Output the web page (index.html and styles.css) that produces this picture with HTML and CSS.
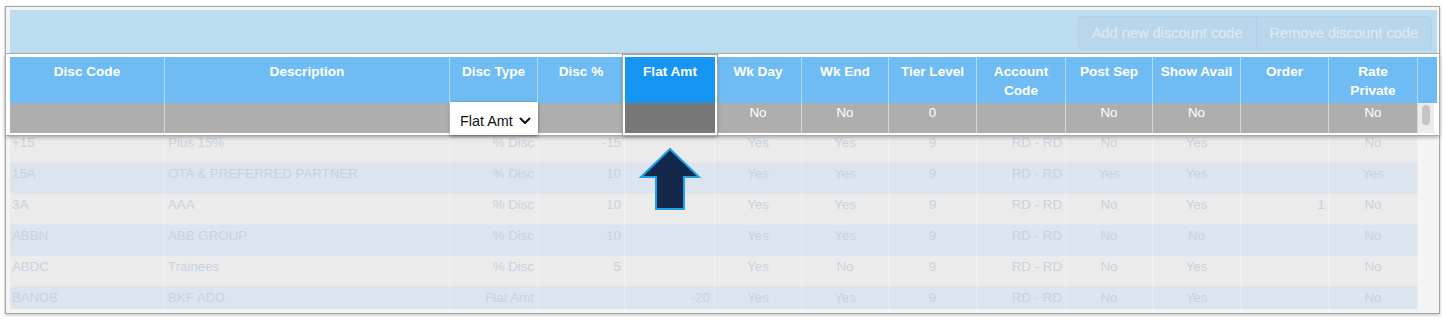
FILE: index.html
```html
<!DOCTYPE html>
<html>
<head>
<meta charset="utf-8">
<link rel="stylesheet" href="styles.css">
</head>
<body>
<div class="frame">
  <div class="toolbar">
    <div class="btn-group">
      <span class="btn">Add new discount code</span>
      <span class="btn">Remove discount code</span>
    </div>
  </div>

  <div class="head">
    <div class="th">Disc Code</div>
    <div class="th">Description</div>
    <div class="th">Disc Type</div>
    <div class="th">Disc %</div>
    <div class="hl">
      <div class="hl-top">Flat Amt</div>
      <div class="hl-bot"></div>
    </div>
    <div class="th">Wk Day</div>
    <div class="th">Wk End</div>
    <div class="th">Tier Level</div>
    <div class="th">Account<br>Code</div>
    <div class="th">Post Sep</div>
    <div class="th">Show Avail</div>
    <div class="th">Order</div>
    <div class="th">Rate<br>Private</div>
    <div class="th filler"></div>

    <div class="tf"></div>
    <div class="tf"></div>
    <div class="tf"><div class="select"><span>Flat Amt</span><svg width="12" height="8" viewBox="0 0 12 8"><path d="M1.5 1.5 L6 6 L10.5 1.5" fill="none" stroke="#111" stroke-width="2" stroke-linecap="round" stroke-linejoin="round"/></svg></div></div>
    <div class="tf"></div>
    <div class="tf">No</div>
    <div class="tf">No</div>
    <div class="tf">0</div>
    <div class="tf"></div>
    <div class="tf">No</div>
    <div class="tf">No</div>
    <div class="tf"></div>
    <div class="tf">No</div>
    <div class="tf gutter"><div class="thumb"></div></div>
  </div>

  <div class="body">
    <div class="row"><span>+15</span><span>Plus 15%</span><span>% Disc</span><span>-15</span><span></span><span>Yes</span><span>Yes</span><span>9</span><span>RD - RD</span><span>No</span><span>Yes</span><span></span><span>No</span></div>
    <div class="row"><span>15A</span><span>OTA &amp; PREFERRED PARTNER</span><span>% Disc</span><span>10</span><span></span><span>Yes</span><span>Yes</span><span>9</span><span>RD - RD</span><span>Yes</span><span>Yes</span><span></span><span>Yes</span></div>
    <div class="row"><span>3A</span><span>AAA</span><span>% Disc</span><span>10</span><span></span><span>Yes</span><span>Yes</span><span>9</span><span>RD - RD</span><span>No</span><span>Yes</span><span>1</span><span>No</span></div>
    <div class="row"><span>ABBN</span><span>ABB GROUP</span><span>% Disc</span><span>10</span><span></span><span>Yes</span><span>Yes</span><span>9</span><span>RD - RD</span><span>No</span><span>No</span><span></span><span>No</span></div>
    <div class="row"><span>ABDC</span><span>Trainees</span><span>% Disc</span><span>5</span><span></span><span>Yes</span><span>No</span><span>9</span><span>RD - RD</span><span>No</span><span>Yes</span><span></span><span>No</span></div>
    <div class="row"><span>BANDB</span><span>BKF ADD</span><span>Flat Amt</span><span></span><span>-20</span><span>Yes</span><span>Yes</span><span>9</span><span>RD - RD</span><span>No</span><span>Yes</span><span></span><span>No</span></div>
  </div>
</div>

<svg class="arrow" width="64" height="66" viewBox="0 0 64 66">
  <path d="M32 3 L61 31 L46 31 L46 63 L18 63 L18 31 L3 31 Z" fill="#13284a" stroke="#1fa0e8" stroke-width="2" stroke-linejoin="miter"/>
</svg>
</body>
</html>
```

FILE: styles.css
```css
* { box-sizing: border-box; }

html, body {
  margin: 0;
  padding: 0;
  background: #ffffff;
}

body {
  font-family: "Liberation Sans", Arial, Helvetica, sans-serif;
  font-size: 13px;
  width: 1445px;
  height: 322px;
  overflow: hidden;
}

.frame {
  position: relative;
  margin: 6px 0 0 5px;
  width: 1435px;
  height: 308px;
  border: 1px solid #a6a6a6;
  box-shadow: 0 1px 3px rgba(0, 0, 0, 0.28);
  background: #f4f4f4;
  padding: 3px 2px 4px 4px;
}

/* toolbar */
.toolbar {
  height: 44px;
  background: #bcdcf0;
  display: flex;
  align-items: center;
  justify-content: flex-end;
  padding-right: 5px;
}

.btn-group {
  display: flex;
  height: 34px;
  margin-top: 2px;
  border: 1px solid #b0d1e8;
  border-radius: 4px;
  background: #b8d7ec;
}

.btn {
  display: flex;
  align-items: center;
  padding: 0 13px;
  font-size: 14.6px;
  color: #dfebf4;
}

.btn + .btn {
  border-left: 1px solid #aecfe6;
}

/* popped-out header */
.head {
  position: relative;
  z-index: 2;
  margin: 0 -2px 0 -4px;
  border-style: solid;
  border-color: #ffffff;
  border-width: 3px 2px 2px 4px;
  background: #ffffff;
  box-shadow: 0 0 0 1px #a9a9a9, 0 2px 4px rgba(0, 0, 0, 0.35);
  display: grid;
  grid-template-columns: 155px 285px 88px 87px 90px 87px 87px 88px 89px 87px 88px 88px 89px 19px;
  grid-template-rows: 46px 30px;
}

.th {
  background: #6fbcf4;
  color: #ffffff;
  font-weight: bold;
  font-size: 13.6px;
  text-align: center;
  line-height: 19px;
  padding-top: 5px;
  border-right: 1px solid rgba(255, 255, 255, 0.45);
}

.th.filler {
  border-right: 0;
}

.tf {
  background: #aeaeae;
  color: #ffffff;
  font-size: 13.4px;
  text-align: center;
  line-height: 19px;
  border-right: 1px solid rgba(255, 255, 255, 0.5);
  position: relative;
}

.tf.gutter {
  background: #ececec;
  border-right: 3px solid #ffffff;
  padding: 2px 3px 0 4px;
}

.thumb {
  width: 8px;
  height: 20px;
  border-radius: 4px;
  background: #c4c4c4;
}

.hl {
  grid-row: span 2;
  position: relative;
  z-index: 1;
  display: grid;
  grid-template-rows: 46px 30px;
  outline: 2px solid #ffffff;
  box-shadow: 0 0 0 3px #a3a3a3, 0 2px 4px 2px rgba(0, 0, 0, 0.3);
}

.hl-top {
  background: #1795f5;
  color: #ffffff;
  font-weight: bold;
  font-size: 13.6px;
  text-align: center;
  line-height: 19px;
  padding-top: 5px;
}

.hl-bot {
  background: #787878;
}

.select {
  position: relative;
  z-index: 3;
  margin: -1px -1px 0 0;
  height: 33px;
  background: #ffffff;
  box-shadow: 0 1px 3px rgba(0, 0, 0, 0.45);
  display: flex;
  align-items: flex-end;
  justify-content: space-between;
  padding: 0 7px 5px 10px;
  color: #111111;
  font-size: 14.4px;
  line-height: 18px;
}

.select svg {
  margin-bottom: 5px;
}

/* faded data rows */
.body {
  margin-top: -3px;
  height: 177px;
  width: 1408px;
  overflow: hidden;
}

.row {
  display: grid;
  grid-template-columns: 155px 285px 88px 87px 90px 87px 87px 88px 89px 87px 88px 88px 89px;
  height: 31px;
  background: #ebebeb;
  border-bottom: 1px solid #e3e6ea;
  color: #c7d2de;
  font-size: 13.3px;
  line-height: 16px;
}

.row:nth-child(even) {
  background: #dce4ef;
}

.row > span {
  padding: 3px 3px 0;
  border-right: 1px solid rgba(255, 255, 255, 0.3);
  white-space: nowrap;
}

.row > span:nth-child(1),
.row > span:nth-child(2) {
  text-align: left;
}

.row > span:nth-child(1) {
  padding-left: 2px;
}

.row > span:nth-child(3),
.row > span:nth-child(4),
.row > span:nth-child(9),
.row > span:nth-child(12) {
  text-align: right;
}

.row > span:nth-child(5) {
  text-align: right;
  padding-right: 4px;
}

.row > span:nth-child(6),
.row > span:nth-child(7),
.row > span:nth-child(8),
.row > span:nth-child(10),
.row > span:nth-child(11),
.row > span:nth-child(13) {
  text-align: center;
}

/* annotation arrow */
.arrow {
  position: absolute;
  left: 638px;
  top: 146px;
  z-index: 5;
}
```
